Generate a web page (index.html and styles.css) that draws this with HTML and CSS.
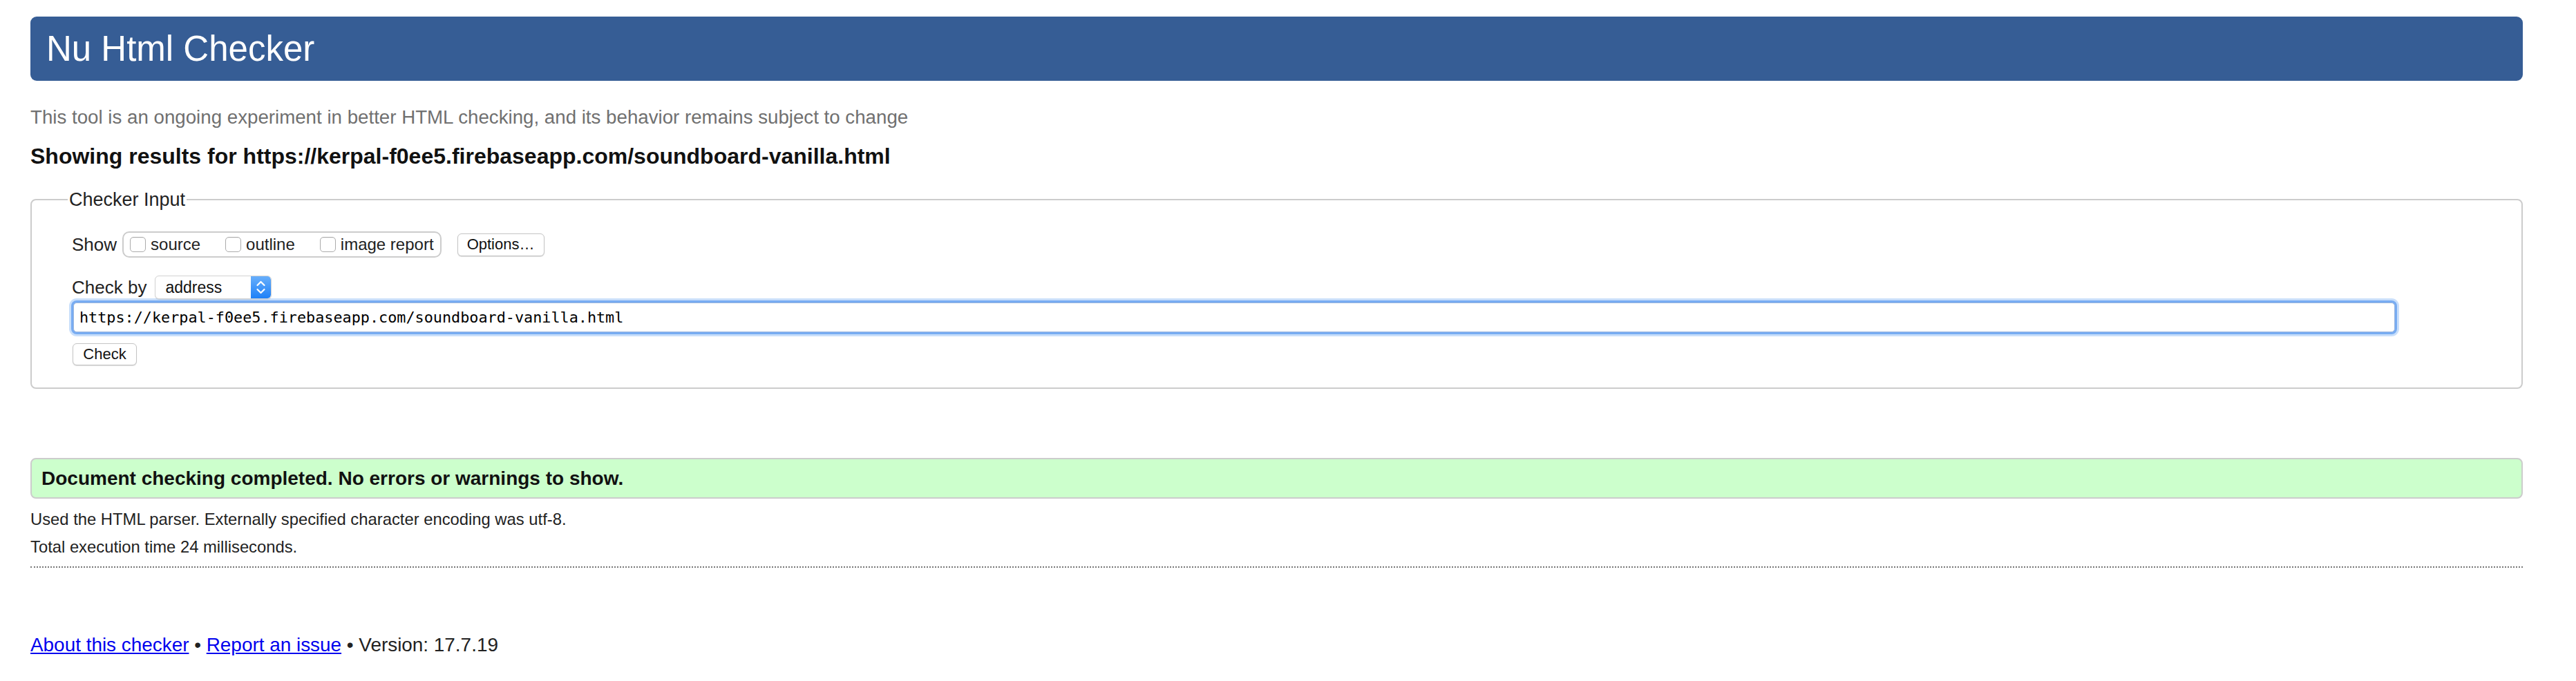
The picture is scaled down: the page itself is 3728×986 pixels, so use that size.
FILE: index.html
```html
<!DOCTYPE html>
<html lang="en">
<head>
<meta charset="utf-8">
<title>Nu Html Checker</title>
<link rel="stylesheet" href="styles.css">
</head>
<body>
<h1 class="title">Nu Html Checker</h1>
<p class="intro">This tool is an ongoing experiment in better HTML checking, and its behavior remains subject to change</p>
<p class="showing">Showing results for https://kerpal-f0ee5.firebaseapp.com/soundboard-vanilla.html</p>
<form class="checker">
  <fieldset class="checker-input">
    <legend class="legend">Checker Input</legend>
    <div class="row show-row">
      <span class="label">Show</span>
      <div class="group">
        <label class="opt"><input type="checkbox" class="cb"><span>source</span></label>
        <label class="opt"><input type="checkbox" class="cb"><span>outline</span></label>
        <label class="opt"><input type="checkbox" class="cb"><span>image report</span></label>
      </div>
      <button type="button" class="btn options">Options…</button>
    </div>
    <div class="row by-row">
      <span class="label">Check by</span>
      <span class="select">
        <span class="select-text">address</span>
        <span class="stepper">
          <svg width="29" height="34" viewBox="0 0 29 34" aria-hidden="true">
            <path d="M9.5 14 L14.5 9 L19.5 14" fill="none" stroke="#fff" stroke-width="2.2" stroke-linecap="round" stroke-linejoin="round"/>
            <path d="M9.5 20 L14.5 25 L19.5 20" fill="none" stroke="#fff" stroke-width="2.2" stroke-linecap="round" stroke-linejoin="round"/>
          </svg>
        </span>
      </span>
    </div>
    <input class="url" type="text" value="https://kerpal-f0ee5.firebaseapp.com/soundboard-vanilla.html">
    <div class="actions"><button type="button" class="btn check">Check</button></div>
  </fieldset>
</form>
<p class="success">Document checking completed. No errors or warnings to show.</p>
<p class="details first">Used the HTML parser. Externally specified character encoding was utf-8.</p>
<p class="details">Total execution time 24 milliseconds.</p>
<hr class="dotted">
<p class="footer"><a href="#" class="link">About this checker</a> • <a href="#" class="link">Report an issue</a> • Version: 17.7.19</p>
</body>
</html>
```
FILE: styles.css
```css
html {
  background: #fff;
}

body {
  margin: 0;
  padding: 24px 77px 30px 44px;
  font-family: "Liberation Sans", Arial, Helvetica, sans-serif;
  color: #222;
}

.title {
  margin: 0;
  height: 93px;
  padding-left: 23px;
  background: #365d95;
  border-radius: 9px;
  color: #fff;
  font-size: 51px;
  font-weight: normal;
  line-height: 93px;
}

.intro {
  margin: 37px 0 0;
  font-size: 27.7px;
  line-height: 32px;
  color: #707070;
}

.showing {
  margin: 22px 0 0;
  font-size: 32px;
  line-height: 36px;
  font-weight: bold;
  color: #111;
}

.checker {
  margin: 30px 0 0;
}

.checker-input {
  margin: 0;
  min-width: 0;
  padding: 31px 58px 32px;
  border: 2px solid #ccc;
  border-radius: 8px;
}

.legend {
  margin-left: -6px;
  padding: 0 2px;
  font-size: 27px;
  line-height: 30px;
  color: #222;
}

.row {
  display: flex;
  align-items: center;
}

.show-row {
  height: 38px;
}

.label {
  font-size: 26px;
  color: #222;
}

.group {
  display: flex;
  align-items: center;
  gap: 36px;
  height: 38px;
  box-sizing: border-box;
  margin-left: 8px;
  padding: 0 9px;
  border: 2px solid #ccc;
  border-radius: 10px;
}

.opt {
  display: flex;
  align-items: center;
  gap: 7px;
  font-size: 24px;
  color: #222;
}

.cb {
  appearance: none;
  -webkit-appearance: none;
  margin: 0;
  width: 23px;
  height: 22px;
  box-sizing: border-box;
  border: 1px solid #acacac;
  border-radius: 5px;
  background: #fff;
  box-shadow: inset 0 1px 1px rgba(0, 0, 0, 0.06);
}

.btn {
  font-family: "Liberation Sans", Arial, Helvetica, sans-serif;
  font-size: 22px;
  color: #111;
  background: #fff;
  border: 1px solid #c4c4c4;
  border-radius: 6px;
  box-shadow: 0 1px 1px rgba(0, 0, 0, 0.14);
  padding: 0;
}

.options {
  margin-left: 23px;
  width: 126px;
  height: 33px;
}

.by-row {
  margin-top: 26px;
  height: 34px;
}

.select {
  display: flex;
  align-items: center;
  justify-content: space-between;
  width: 169px;
  height: 34px;
  box-sizing: border-box;
  margin-left: 12px;
  border: 1px solid #d2d2d2;
  border-radius: 6px;
  background: #fff;
  box-shadow: 0 1px 1px rgba(0, 0, 0, 0.1);
  overflow: hidden;
}

.select-text {
  padding-left: 14px;
  font-size: 23px;
  color: #111;
}

.stepper {
  display: flex;
  width: 29px;
  height: 34px;
  background: linear-gradient(#6ab0fb, #1b7ff8);
  border-radius: 0 6px 6px 0;
}

.url {
  display: block;
  box-sizing: border-box;
  width: 3360px;
  height: 43px;
  margin: 5px 0 0 2px;
  padding: 0 8px;
  border: 1px solid #9ab6de;
  border-radius: 5px;
  font-family: "DejaVu Sans Mono", "Liberation Mono", monospace;
  font-size: 21.8px;
  color: #000;
  background: #fff;
  outline: none;
  box-shadow: 0 0 0 3px #78acf2, 0 0 0 6px #c9dffb;
}

.actions {
  margin-top: 16px;
}

.check {
  margin-left: 1px;
  width: 93px;
  height: 32px;
}

.success {
  margin: 100px 0 0;
  height: 59px;
  box-sizing: border-box;
  padding-left: 14px;
  border: 2px solid #ccc;
  border-radius: 8px;
  background: #ccffcc;
  font-size: 28px;
  font-weight: bold;
  line-height: 55px;
  color: #111;
}

.details {
  margin: 12px 0 0;
  font-size: 23.8px;
  line-height: 28px;
  color: #222;
}

.details.first {
  margin-top: 16px;
}

.dotted {
  margin: 14px 0 0;
  height: 0;
  border: 0;
  border-top: 2px dotted #777;
}

.footer {
  margin: 96px 0 0;
  font-size: 27.9px;
  line-height: 32px;
  color: #222;
}

.link {
  color: #0000ee;
}
```
